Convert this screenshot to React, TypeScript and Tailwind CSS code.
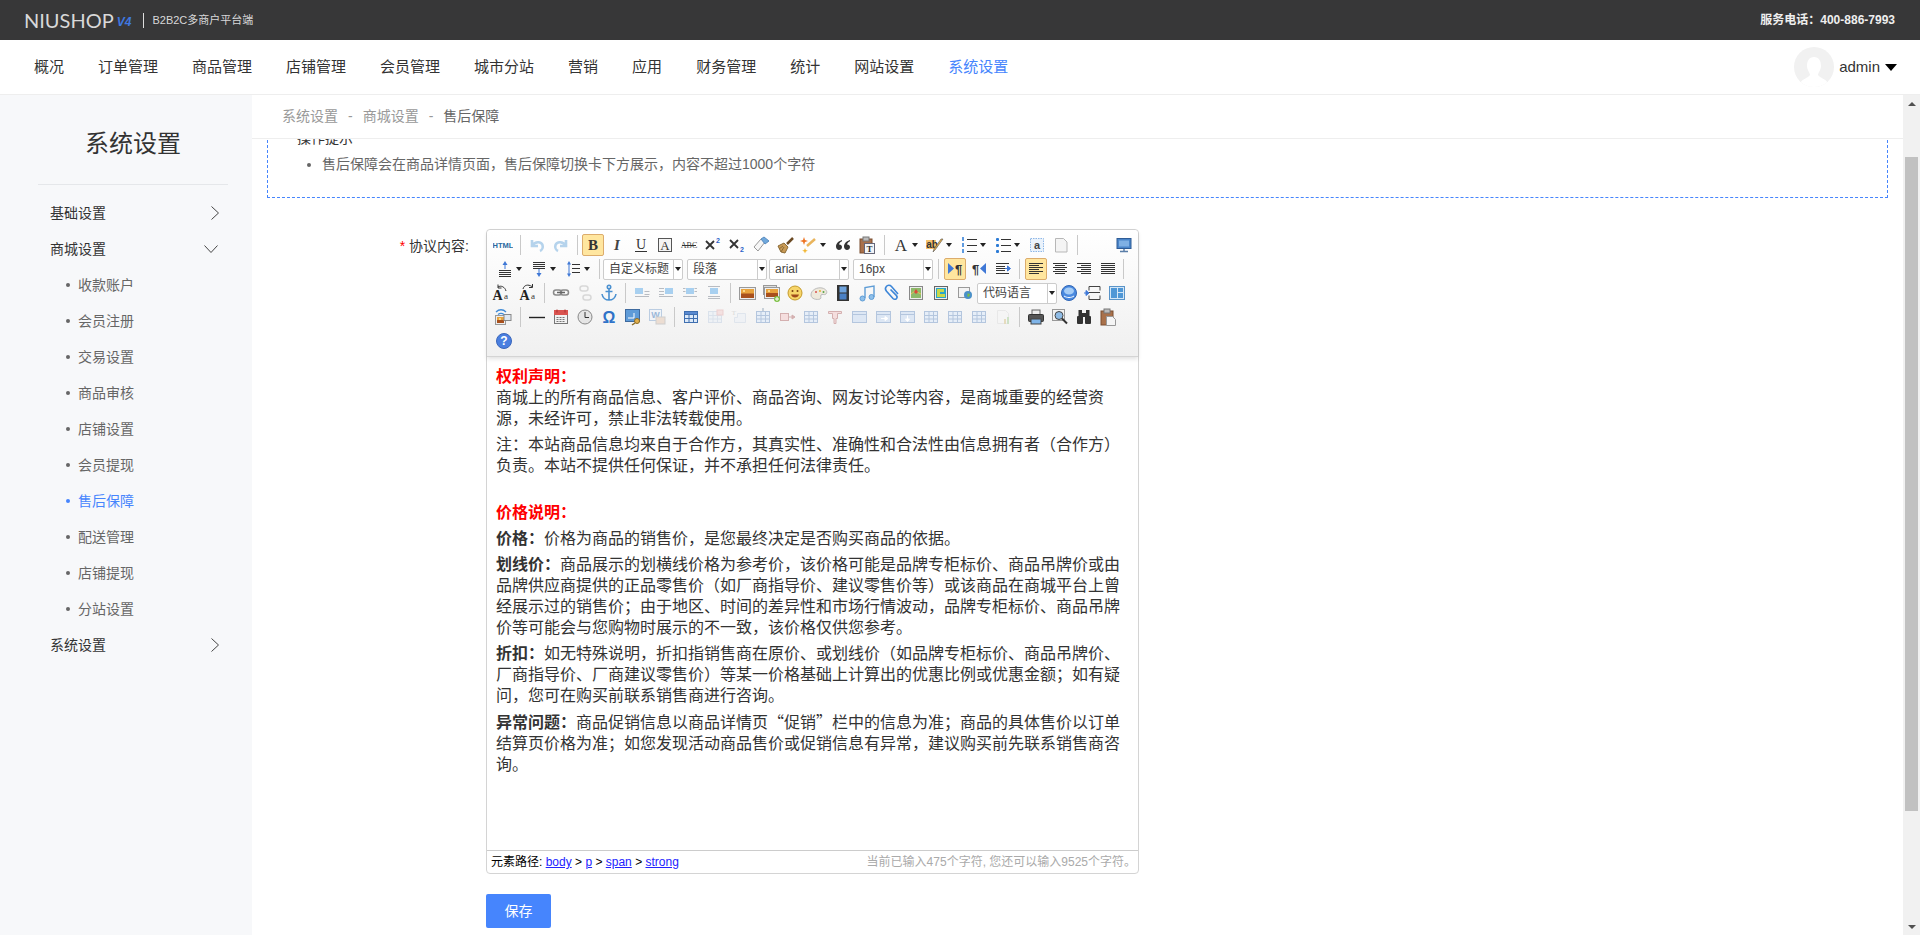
import React from "react";

const NAV = ["概况", "订单管理", "商品管理", "店铺管理", "会员管理", "城市分站", "营销", "应用", "财务管理", "统计", "网站设置", "系统设置"];
const SUB = ["收款账户", "会员注册", "交易设置", "商品审核", "店铺设置", "会员提现", "售后保障", "配送管理", "店铺提现", "分站设置"];

const serif = "Liberation Serif, serif";
const sans = "Liberation Sans, sans-serif";

// source strings are kept in ascii punctuation, the page shows the full-width forms
const PUNCT: Record<string, string> = { ",": "\uFF0C", ":": "\uFF1A", ";": "\uFF1B", "(": "\uFF08", ")": "\uFF09" };
const zh = (s: string) => s.replace(/[,:;()]/g, (c) => PUNCT[c]);

const Lines = ({ x = 4, w = 12, ys, c = "#333" }: { x?: number; w?: number; ys: number[]; c?: string }) => (
  <g stroke={c} strokeWidth="1">
    {ys.map((y, i) => (
      <line key={i} x1={x} x2={x + w} y1={y + 0.5} y2={y + 0.5} />
    ))}
  </g>
);

const Pic = ({ x = 3, y = 5, w = 14, h = 10 }: { x?: number; y?: number; w?: number; h?: number }) => (
  <g>
    <rect x={x - 0.5} y={y - 0.5} width={w + 1} height={h + 1} fill="#eee" stroke="#999" />
    <rect x={x + 1} y={y + 1} width={w - 2} height={h - 2} fill="#a8501c" />
    <rect x={x + 1} y={y + 1} width={w - 2} height={(h - 2) / 2} fill="#e8a23c" />
    <circle cx={x + 4} cy={y + 3} r="1" fill="#ffe9a0" />
  </g>
);

const ImgAlign = ({ kind }: { kind: number }) => (
  <g>
    <rect x={kind === 0 ? 3 : kind === 1 ? 9 : 6} y={5} width={8} height={6} fill="#a8d0f0" />
    <g stroke="#b8bcc2">
      {kind === 0 && <path d="M12.5 8.5h5M12.5 11.5h5M3 13.5h14" />}
      {kind === 1 && <path d="M3 5.5h5M3 8.5h5M3 11.5h5M3 13.5h14" />}
      {kind === 2 && <path d="M3 5.5h2.5M14.5 5.5H17M3 8.5h2.5M14.5 8.5H17M3 13.5h14" />}
      {kind === 3 && <path d="M4 3.5h12M4 13.5h12M4 15.5h12" />}
    </g>
  </g>
);

const Grid = ({ hi }: { hi?: React.ReactNode }) => (
  <g>
    <rect x="3.5" y="4.5" width="13" height="11" fill="#e6eef8" stroke="#b4c6de" />
    <path d="M3.5 8.5h13M3.5 12h13M8 4.5v11M12.5 4.5v11" stroke="#b4c6de" fill="none" />
    {hi}
  </g>
);

const Cell = ({ hi }: { hi?: React.ReactNode }) => (
  <g>
    <rect x="3.5" y="4.5" width="14" height="11" fill="#dde7f4" stroke="#b4c6de" />
    <path d="M3.5 7.5h14" stroke="#b4c6de" />
    {hi}
  </g>
);

// toolbar sprite, redrawn by hand
const ICONS: Record<string, React.ReactNode> = {
  html: <text x="10" y="13" textAnchor="middle" fontSize="7.5" fontWeight="700" fill="#2b6aa0" fontFamily={sans}>HTML</text>,
  undo: <path d="M5 5v6h6M5.5 10.5C8 6.5 14 6 15.5 10c.8 2.5-.5 5-2.5 6" fill="none" stroke="#b5d3ec" strokeWidth="2.6" />,
  redo: <path d="M15 5v6H9M14.5 10.5C12 6.5 6 6 4.5 10c-.8 2.5.5 5 2.5 6" fill="none" stroke="#b5d3ec" strokeWidth="2.6" />,
  b: <text x="10" y="15" textAnchor="middle" fontSize="15" fontWeight="700" fill="#333" fontFamily={serif}>B</text>,
  i: <text x="10" y="15" textAnchor="middle" fontSize="15" fontStyle="italic" fontWeight="700" fill="#444" fontFamily={serif}>I</text>,
  u: (
    <g>
      <text x="10" y="14" textAnchor="middle" fontSize="14" fill="#333" fontFamily={serif}>U</text>
      <line x1="4" x2="16" y1="16.5" y2="16.5" stroke="#333" />
    </g>
  ),
  abox: (
    <g>
      <rect x="3.5" y="3.5" width="13" height="13" fill="#f4f4f4" stroke="#555" />
      <text x="10" y="15" textAnchor="middle" fontSize="13" fill="#333" fontFamily={serif}>A</text>
    </g>
  ),
  strike: (
    <g>
      <text x="10" y="13" textAnchor="middle" fontSize="8" fill="#444" fontFamily={serif}>ABC</text>
      <line x1="3" x2="17" y1="10.5" y2="10.5" stroke="#333" />
    </g>
  ),
  sup: (
    <g>
      <path d="M3 6l8 8M11 6l-8 8" stroke="#333" strokeWidth="1.8" />
      <text x="15" y="8" textAnchor="middle" fontSize="7" fontWeight="700" fill="#2b62c8" fontFamily={sans}>2</text>
    </g>
  ),
  sub: (
    <g>
      <path d="M3 5l8 8M11 5l-8 8" stroke="#333" strokeWidth="1.8" />
      <text x="15" y="17" textAnchor="middle" fontSize="7" fontWeight="700" fill="#2b62c8" fontFamily={sans}>2</text>
    </g>
  ),
  eraser: (
    <g>
      <path d="M3 12l7-8 4 3-7 9z" fill="#f6f6f6" stroke="#999" />
      <path d="M10 4l3-2 5 4-4 3z" fill="#6fa8dc" stroke="#5a8cc0" />
    </g>
  ),
  brush: (
    <g>
      <path d="M18 3l-6 6" stroke="#6b4a24" strokeWidth="2.5" />
      <path d="M3 11l6-3 4 4-3 6-4-1z" fill="#c99a55" stroke="#8a6a35" />
      <path d="M6 17l3-5M4 14l4-3" stroke="#8a6a35" />
    </g>
  ),
  magic: (
    <g>
      <path d="M8 11l8-7" stroke="#e9b45c" strokeWidth="2.5" />
      <path d="M5 2l1 3 3 1-3 1-1 3-1-3-3-1 3-1z" fill="#ee7322" />
      <path d="M6 13l.8 2 2 .8-2 .8-.8 2-.8-2-2-.8 2-.8z" fill="#f2b632" />
    </g>
  ),
  quote: (
    <g fill="#333">
      <path d="M9 5C6 6 3 8 3 11.5 3 13.5 4.5 15 6 15s3-1.3 3-3-1.5-2.7-3-2.5C6.3 8 7.5 7 9 6.3z" />
      <path d="M17 5c-3 1-6 3-6 6.5 0 2 1.5 3.5 3 3.5s3-1.3 3-3-1.5-2.7-3-2.5c.3-1.5 1.5-2.5 3-3.2z" />
    </g>
  ),
  pastet: (
    <g>
      <rect x="3" y="4" width="12" height="14" fill="#a9714b" stroke="#7a4f30" />
      <rect x="6" y="2" width="6" height="4" fill="#bbb" stroke="#777" />
      <rect x="7.5" y="8.5" width="10" height="10" fill="#f2f5f8" stroke="#667" />
      <text x="12.5" y="17" textAnchor="middle" fontSize="9" fontWeight="700" fill="#333" fontFamily={serif}>T</text>
    </g>
  ),
  fore: <text x="10" y="16" textAnchor="middle" fontSize="17" fill="#333" fontFamily={serif}>A</text>,
  back: (
    <g>
      <rect x="1" y="5" width="10" height="9" fill="#f5c26b" />
      <text x="7" y="12.5" textAnchor="middle" fontSize="10" fontWeight="700" fill="#333" fontFamily={sans}>ab</text>
      <path d="M18 4l-8 11-2 2 1-3 7-10z" fill="#e8b04a" stroke="#555" strokeWidth=".6" />
    </g>
  ),
  ol: (
    <g>
      <path d="M3 3h3M3 9h3M3 15h3M3 5h3M3 11h3M3 17h3" stroke="#2b7bd6" strokeWidth="1.4" strokeDasharray="2 1" />
      <Lines x={8} w={10} ys={[4, 10, 16]} />
    </g>
  ),
  ul: (
    <g>
      <g fill="#2b7bd6">
        <rect x="3" y="3" width="3" height="3" rx="1" />
        <rect x="3" y="9" width="3" height="3" rx="1" />
        <rect x="3" y="15" width="3" height="3" rx="1" />
      </g>
      <Lines x={8} w={10} ys={[4, 10, 16]} />
    </g>
  ),
  sel: (
    <g>
      <rect x="3.5" y="3.5" width="13" height="13" fill="#eaf2fb" stroke="#8db6e6" strokeDasharray="1.5 1" />
      <text x="10" y="14" textAnchor="middle" fontSize="11" fontWeight="700" fill="#444" fontFamily={sans}>a</text>
    </g>
  ),
  doc: <path d="M4.5 3.5h8l3.5 3.5v10H4.5z" fill="#f4f4f4" stroke="#b7b7b7" />,
  full: (
    <g>
      <rect x="3" y="3.5" width="14" height="10" fill="#4a85c9" stroke="#2f5c96" />
      <rect x="5" y="5.5" width="10" height="6" fill="#7fb0e4" />
      <path d="M6 16.5h8M10 14v2" stroke="#5a7ea8" strokeWidth="1.5" />
    </g>
  ),
  rowtop: (
    <g>
      <path d="M10 2l-2.5 4h5z" fill="#3f78d6" />
      <line x1="10" x2="10" y1="5" y2="10" stroke="#3f78d6" />
      <Lines x={4} w={12} ys={[11, 13, 15, 17]} />
    </g>
  ),
  rowbot: (
    <g>
      <Lines x={4} w={12} ys={[3, 5, 7, 9]} />
      <line x1="10" x2="10" y1="10" y2="15" stroke="#3f78d6" />
      <path d="M10 18l-2.5-4h5z" fill="#3f78d6" />
    </g>
  ),
  lh: (
    <g>
      <path d="M6 2L4 5.5h4zM6 18L4 14.5h4z" fill="#3f78d6" />
      <line x1="6" x2="6" y1="5" y2="15" stroke="#3f78d6" />
      <Lines x={9} w={8} ys={[5, 9, 13]} />
    </g>
  ),
  ltr: (
    <g>
      <path d="M3 4l6 5.5-6 5.5z" fill="#3f78d6" />
      <text x="13.5" y="15" textAnchor="middle" fontSize="13" fontWeight="700" fill="#333" fontFamily={sans}>¶</text>
    </g>
  ),
  rtl: (
    <g>
      <path d="M17 4l-6 5.5 6 5.5z" fill="#3f78d6" />
      <text x="6.5" y="15" textAnchor="middle" fontSize="13" fontWeight="700" fill="#333" fontFamily={sans}>¶</text>
    </g>
  ),
  indent: (
    <g>
      <Lines x={3} w={13} ys={[4, 14]} />
      <Lines x={3} w={9} ys={[7, 9, 11]} />
      <path d="M12 9.5h3M17.5 9.5l-3-2.5v5z" stroke="#3f78d6" fill="#3f78d6" />
    </g>
  ),
  just: <Lines x={3} w={14} ys={[4, 6, 8, 10, 12, 14]} />,
  left: <path d="M3 4.5h14M3 6.5h10M3 8.5h14M3 10.5h10M3 12.5h14M3 14.5h10" stroke="#333" />,
  center: <path d="M3 4.5h14M5 6.5h10M3 8.5h14M5 10.5h10M3 12.5h14M5 14.5h10" stroke="#333" />,
  right: <path d="M3 4.5h14M7 6.5h10M3 8.5h14M7 10.5h10M3 12.5h14M7 14.5h10" stroke="#333" />,
  lower: (
    <g>
      <text x="6.5" y="17" textAnchor="middle" fontSize="14" fontWeight="700" fill="#222" fontFamily={serif}>A</text>
      <text x="15" y="16" textAnchor="middle" fontSize="9" fill="#333" fontFamily={serif}>a</text>
      <path d="M15 8C14 4 10 2 7 4M7 1.5V5h3.5" fill="none" stroke="#333" />
    </g>
  ),
  upper: (
    <g>
      <text x="6.5" y="17" textAnchor="middle" fontSize="14" fontWeight="700" fill="#222" fontFamily={serif}>A</text>
      <text x="15" y="16" textAnchor="middle" fontSize="9" fill="#333" fontFamily={serif}>a</text>
      <path d="M5 6c1-4 5-5 9-2.5M14.5 1v3.5H11" fill="none" stroke="#333" />
    </g>
  ),
  link: (
    <g fill="none" stroke="#8a8a8a" strokeWidth="1.5">
      <rect x="2.5" y="7" width="8" height="5" rx="2.5" />
      <rect x="9.5" y="7" width="8" height="5" rx="2.5" />
      <path d="M6 9.5h8" stroke="#666" />
    </g>
  ),
  unlink: (
    <g fill="none" stroke="#aaa" strokeWidth="1.5">
      <rect x="5" y="3" width="8" height="5" rx="2.5" />
      <rect x="8" y="12" width="8" height="5" rx="2.5" />
    </g>
  ),
  anchor: (
    <g fill="none" stroke="#4a90d0" strokeWidth="1.6">
      <circle cx="10" cy="4" r="1.7" />
      <path d="M10 6v11M6.5 8.5h7M3 11c.5 3.5 3.5 6 7 6s6.5-2.5 7-6" />
    </g>
  ),
  a0: <ImgAlign kind={0} />,
  a1: <ImgAlign kind={1} />,
  a2: <ImgAlign kind={2} />,
  a3: <ImgAlign kind={3} />,
  image: <Pic x={3} y={5} w={15} h={11} />,
  images: (
    <g>
      <rect x="2.5" y="2.5" width="13" height="9" fill="#ddd" stroke="#999" />
      <Pic x={4} y={5} w={14} h={10} />
      <circle cx="16" cy="16" r="3" fill="#7cc043" />
      <path d="M16 14v4M14 16h4" stroke="#fff" />
    </g>
  ),
  emo: (
    <g>
      <circle cx="10" cy="10" r="7" fill="#f7d56a" stroke="#c49a2a" />
      <circle cx="7.5" cy="8" r="1" fill="#7a3d10" />
      <circle cx="12.5" cy="8" r="1" fill="#7a3d10" />
      <path d="M6 11.5h8c-.5 2-2 3-4 3s-3.5-1-4-3z" fill="#a04a1a" />
    </g>
  ),
  palette: (
    <g>
      <path d="M2 12c0-5 6-8 11-7 4 .8 6 4 4 6-1.5 1.5-4-.5-5 1-1 1.5 1 3-1 4-3 1.2-9 0-9-4z" fill="#eee9dc" stroke="#bbb" />
      <circle cx="7" cy="9" r="1" fill="#d9534f" />
      <circle cx="11" cy="8" r="1" fill="#e8b339" />
      <circle cx="14.5" cy="9" r="1" fill="#5aa34a" />
    </g>
  ),
  video: (
    <g>
      <rect x="4" y="2" width="12" height="16" fill="#333" />
      <rect x="6.5" y="3.5" width="7" height="6" fill="#6fa3dd" />
      <rect x="6.5" y="10.5" width="7" height="6" fill="#4a80c4" />
    </g>
  ),
  music: (
    <g fill="#8fc0ea" stroke="#5f9dd6">
      <circle cx="5.5" cy="15.5" r="2.5" />
      <circle cx="14.5" cy="14" r="2.5" />
      <path d="M8 15V4.5l9-1.5V14" fill="none" strokeWidth="1.4" />
    </g>
  ),
  attach: <path d="M16 11L9.5 3.5c-1.5-1.7-4-1.5-5.2 0-1.2 1.4-1 3.3.2 4.7l6.5 7.3c1 1 2.5 1.1 3.4.2.9-.9.8-2.3-.1-3.3L8.5 6.5" fill="none" stroke="#3d86d8" strokeWidth="1.6" />,
  map: (
    <g>
      <rect x="3.5" y="3.5" width="13" height="13" fill="#eee" stroke="#888" />
      <rect x="5" y="5" width="10" height="10" fill="#8cba6a" />
      <path d="M5 11l4-3 6 3" stroke="#e4c15a" fill="none" />
      <path d="M10 6l2 3-2 2-2-2z" fill="#d84a3a" />
    </g>
  ),
  gmap: (
    <g>
      <rect x="3.5" y="3.5" width="13" height="13" fill="#eee" stroke="#666" />
      <rect x="5" y="5" width="10" height="10" fill="#2aa5c9" />
      <path d="M6 6h7v3H9v2h5v3H6z" fill="#c8d84a" />
    </g>
  ),
  web: (
    <g>
      <rect x="3.5" y="4.5" width="11" height="10" fill="#f3f3f3" stroke="#999" />
      <circle cx="13" cy="12" r="4" fill="#4a90c8" />
      <path d="M11 10c2 0 2 2 1 3l2 1 1-3z" fill="#7cc043" />
    </g>
  ),
  chart: (
    <g>
      <circle cx="10" cy="10" r="7.5" fill="#4a8ae0" stroke="#2f65b5" />
      <ellipse cx="10" cy="8" rx="5" ry="3.5" fill="#a6cdf6" />
      <path d="M5 13c3 2 7 2 10 0" stroke="#fff" fill="none" />
    </g>
  ),
  pb: (
    <g>
      <path d="M6 3.5h11M6 3.5v4M17 3.5v4M6 12.5v4h11v-4" fill="none" stroke="#444" />
      <path d="M6 9.5h11" stroke="#444" />
      <path d="M1 10h2.5M6 10L3 7.5v5z" fill="#3f78d6" stroke="#3f78d6" />
    </g>
  ),
  tpl: (
    <g>
      <rect x="2.5" y="3.5" width="15" height="13" fill="#d4e6f6" stroke="#5a94c8" />
      <rect x="4" y="5" width="6" height="10" fill="#4f97d6" />
      <rect x="11" y="5" width="5" height="4" fill="#4f97d6" />
      <rect x="11" y="10" width="5" height="5" fill="#4f97d6" />
    </g>
  ),
  bg: (
    <g>
      <Pic x={3} y={9} w={9} h={8} />
      <rect x="11" y="7.5" width="7" height="6" fill="#dde6f0" stroke="#888" />
      <path d="M3 5c3-3 7-3 10 0M5 7.5c2-1.5 4-1.5 6 0" fill="none" stroke="#3f8ad6" strokeWidth="1.3" />
    </g>
  ),
  hr: <line x1="2" x2="18" y1="10.5" y2="10.5" stroke="#222" strokeWidth="1.4" />,
  date: (
    <g>
      <rect x="3.5" y="4.5" width="13" height="12" fill="#f2f2f2" stroke="#777" />
      <rect x="3" y="3" width="14" height="5" fill="#d9534f" />
      <path d="M6 2.5v3M14 2.5v3" stroke="#a33" />
      <path d="M5.5 10.5h9M5.5 12.5h9M5.5 14.5h9" stroke="#777" strokeDasharray="2 1" />
    </g>
  ),
  time: (
    <g>
      <circle cx="10" cy="10" r="7" fill="#e5e5e5" stroke="#888" />
      <path d="M10 5v5.5h4" fill="none" stroke="#333" />
    </g>
  ),
  omega: <text x="10" y="16" textAnchor="middle" fontSize="16" fontWeight="700" fill="#2f72c8" fontFamily={sans}>Ω</text>,
  scrawl: (
    <g>
      <rect x="2.5" y="2.5" width="14" height="12" fill="#5e9bd8" stroke="#3e6a9e" />
      <path d="M5 11h6V6" fill="none" stroke="#fff" />
      <circle cx="14" cy="14" r="2.5" fill="#e2b04d" stroke="#8a6a25" />
      <path d="M12 16l-3 2" stroke="#8a6a25" strokeWidth="1.5" />
    </g>
  ),
  word: (
    <g opacity=".65">
      <rect x="2.5" y="2.5" width="12" height="11" fill="#f0f4fa" stroke="#9db8d8" />
      <text x="8.5" y="11" textAnchor="middle" fontSize="9" fontWeight="700" fill="#6a96c8" fontFamily={sans}>W</text>
      <rect x="9" y="10" width="9" height="7" fill="#e8d2c0" stroke="#bbb" />
    </g>
  ),
  table: (
    <g>
      <rect x="3.5" y="4.5" width="13" height="11" fill="#dce9f8" stroke="#3f6fb0" />
      <rect x="3.5" y="4.5" width="13" height="3" fill="#5a8ad0" stroke="#3f6fb0" />
      <path d="M3.5 11.5h13M8 7v8.5M12.5 7v8.5" stroke="#3f6fb0" fill="none" />
    </g>
  ),
  tdel: <Grid hi={<rect x="12" y="3" width="6" height="5" fill="#f2c4c4" stroke="#d99" />} />,
  tt: (
    <g opacity=".8">
      <text x="5" y="8" textAnchor="middle" fontSize="7" fill="#999" fontFamily={serif}>T</text>
      <path d="M8.5 6.5h8v9h-11v-5h3z" fill="#e6eef8" stroke="#b4c6de" />
    </g>
  ),
  trow: <Grid hi={<path d="M10 1v3" stroke="#9ab" />} />,
  tcol: (
    <g>
      <rect x="3.5" y="6.5" width="8" height="7" fill="#f5dede" stroke="#d4b0b0" />
      <path d="M12 10h4M18 10l-3-2v4z" stroke="#d4b0b0" fill="#d4b0b0" />
    </g>
  ),
  tgrid: <Grid />,
  tpin: <path d="M3.5 4.5h13v2h-4v5H11v5H9v-5H7.5v-5h-4z" fill="#f5dede" stroke="#d4b0b0" />,
  tcell: <Cell />,
  tcellr: <Cell hi={<path d="M8 11.5h5M15 11.5l-3-2v4z" stroke="#fff" fill="#fff" />} />,
  tcelld: <Cell hi={<path d="M10.5 8.5v4M10.5 14.5l-2-2.5h4z" stroke="#fff" fill="#fff" />} />,
  tdoc: (
    <g opacity=".5">
      <path d="M4.5 3.5h8l3 3v10h-11z" fill="#f6f6f6" stroke="#ddd" />
      <rect x="11" y="12" width="2" height="5" fill="#d8c48a" />
      <rect x="14" y="10" width="2" height="7" fill="#a8cf9c" />
    </g>
  ),
  print: (
    <g>
      <rect x="6" y="3" width="8" height="5" fill="#eee" stroke="#666" />
      <rect x="2.5" y="7.5" width="15" height="7" rx="1" fill="#555" stroke="#333" />
      <rect x="5" y="12" width="10" height="5" fill="#7fb4e8" stroke="#444" />
    </g>
  ),
  preview: (
    <g>
      <rect x="2.5" y="2.5" width="12" height="11" fill="#f3f3f3" stroke="#999" />
      <circle cx="9" cy="8.5" r="4" fill="#8fbce6" stroke="#444" />
      <path d="M12 11.5l5 5" stroke="#333" strokeWidth="2" />
    </g>
  ),
  search: (
    <g fill="#333">
      <rect x="3" y="9" width="6" height="8" rx="1" />
      <rect x="11" y="9" width="6" height="8" rx="1" />
      <rect x="4.5" y="3" width="3.5" height="6" />
      <rect x="12" y="3" width="3.5" height="6" />
      <rect x="8" y="6" width="4" height="4" />
    </g>
  ),
  paste: (
    <g>
      <rect x="3" y="4" width="12" height="14" fill="#a9714b" stroke="#7a4f30" />
      <rect x="6" y="2" width="6" height="4" fill="#bbb" stroke="#777" />
      <path d="M8.5 9.5h6l3 3v6h-9z" fill="#f5f5f5" stroke="#999" />
    </g>
  ),
  help: (
    <g>
      <circle cx="10" cy="10" r="7.5" fill="#4a7fe0" stroke="#3a66bb" />
      <text x="10" y="14" textAnchor="middle" fontSize="12" fontWeight="700" fill="#fff" fontFamily={sans}>?</text>
    </g>
  ),
};

function Btn({ n, on, off }: { n: string; on?: boolean; off?: boolean }) {
  return (
    <div className={`flex h-6 w-6 shrink-0 items-center justify-center ${off ? "opacity-40" : ""}`}>
      <div className={`flex h-[22px] w-[22px] items-center justify-center rounded-[2px] border ${on ? "border-[#dcac6c] bg-[#ffe69f]" : "border-transparent"}`}>
        <svg width="20" height="20" viewBox="0 0 20 20">
          {ICONS[n]}
        </svg>
      </div>
    </div>
  );
}

function Split({ n }: { n: string }) {
  return (
    <div className="flex h-6 w-[34px] shrink-0 items-center">
      <Btn n={n} />
      <span className="ml-[-1px] h-0 w-0 border-x-[3.5px] border-t-[4px] border-x-transparent border-t-[#222]" />
    </div>
  );
}

function Sep({ w = 10 }: { w?: number }) {
  return (
    <div className="flex h-6 shrink-0 items-center justify-center" style={{ width: w }}>
      <span className="h-5 w-px bg-[#c9c9c9]" />
    </div>
  );
}

function Combo({ label, ml = 0 }: { label: string; ml?: number }) {
  return (
    <div className="flex h-[21px] w-20 shrink-0 items-center rounded-[2px] border border-[#ccc] bg-white text-[12px] text-[#444]" style={{ marginLeft: ml }}>
      <span className="flex-1 truncate pl-[5px]">{label}</span>
      <span className="flex h-full w-[9px] items-center justify-center border-l border-[#ccc]">
        <span className="h-0 w-0 border-x-[3px] border-t-[4px] border-x-transparent border-t-[#222]" />
      </span>
    </div>
  );
}

function Toolbar() {
  return (
    <div className="h-[127px] shrink-0 rounded-t-[4px] border-b border-[#d4d4d4] bg-gradient-to-b from-white to-[#f0f0f0] pt-[3px] shadow-[0_2px_4px_rgba(0,0,0,0.12)]">
      <div className="flex h-6 items-center pl-[4px]">
        <Btn n="html" />
        <Sep />
        <Btn n="undo" />
        <Btn n="redo" />
        <Sep w={8} />
        <Btn n="b" on />
        <Btn n="i" />
        <Btn n="u" />
        <Btn n="abox" />
        <Btn n="strike" />
        <Btn n="sup" />
        <Btn n="sub" />
        <Btn n="eraser" />
        <Btn n="brush" />
        <Split n="magic" />
        <Btn n="quote" />
        <Btn n="pastet" />
        <Sep />
        <Split n="fore" />
        <Split n="back" />
        <Split n="ol" />
        <Split n="ul" />
        <Btn n="sel" />
        <Btn n="doc" />
        <Sep w={8} />
        <div className="w-[31px] shrink-0" />
        <Btn n="full" />
      </div>
      <div className="flex h-6 items-center pl-[6px]">
        <Split n="rowtop" />
        <Split n="rowbot" />
        <Split n="lh" />
        <Sep w={8} />
        <Combo label="自定义标题" />
        <Combo label="段落" ml={4} />
        <Combo label="arial" ml={2} />
        <Combo label="16px" ml={4} />
        <Sep />
        <Btn n="ltr" on />
        <Btn n="rtl" />
        <Btn n="indent" />
        <Sep w={9} />
        <Btn n="left" on />
        <Btn n="center" />
        <Btn n="right" />
        <Btn n="just" />
        <Sep w={6} />
      </div>
      <div className="flex h-6 items-center pl-[2px]">
        <Btn n="lower" />
        <div className="w-[3px] shrink-0" />
        <Btn n="upper" />
        <Sep w={9} />
        <Btn n="link" />
        <Btn n="unlink" off />
        <Btn n="anchor" />
        <Sep w={9} />
        <Btn n="a0" />
        <Btn n="a1" />
        <Btn n="a2" />
        <Btn n="a3" />
        <Sep w={9} />
        <Btn n="image" />
        <Btn n="images" />
        <Btn n="emo" />
        <Btn n="palette" />
        <Btn n="video" />
        <Btn n="music" />
        <div className="w-px shrink-0" />
        <Btn n="attach" />
        <Btn n="map" />
        <div className="w-px shrink-0" />
        <Btn n="gmap" />
        <Btn n="web" />
        <Combo label="代码语言" />
        <Btn n="chart" />
        <Btn n="pb" />
        <Btn n="tpl" />
      </div>
      <div className="flex h-6 items-center pl-[4px]">
        <Btn n="bg" />
        <Sep />
        <Btn n="hr" />
        <Btn n="date" />
        <Btn n="time" />
        <Btn n="omega" />
        <Btn n="scrawl" />
        <Btn n="word" />
        <Sep />
        <Btn n="table" />
        <Btn n="tdel" off />
        <Btn n="tt" off />
        <Btn n="trow" />
        <Btn n="tcol" />
        <Btn n="tgrid" />
        <Btn n="tpin" />
        <Btn n="tcell" />
        <Btn n="tcellr" />
        <Btn n="tcelld" />
        <Btn n="tgrid" />
        <Btn n="tgrid" />
        <Btn n="tgrid" />
        <Btn n="tdoc" />
        <Sep w={9} />
        <Btn n="print" />
        <Btn n="preview" />
        <Btn n="search" />
        <Btn n="paste" />
      </div>
      <div className="flex h-6 items-center pl-[5px]">
        <Btn n="help" />
      </div>
    </div>
  );
}

function Sidebar() {
  return (
    <aside className="w-[252px] shrink-0 bg-[#f7f8fa]">
      <div className="ml-[38px] mr-[24px] flex h-[90px] items-center justify-center border-b border-[#e5e7ea] pt-[8px] text-[24px] text-[#333]">系统设置</div>
      <div className="mt-[10px] text-[14px]">
        <div className="flex h-9 items-center justify-between pl-[50px] pr-[33px] text-[#333]">
          基础设置
          <svg width="8" height="14" viewBox="0 0 8 14" fill="none" stroke="#444">
            <path d="M.5.5l7 6.5-7 6.5" />
          </svg>
        </div>
        <div className="flex h-9 items-center justify-between pl-[50px] pr-[34px] text-[#333]">
          商城设置
          <svg width="14" height="8" viewBox="0 0 14 8" fill="none" stroke="#444">
            <path d="M.5.5l6.5 7 6.5-7" />
          </svg>
        </div>
        {SUB.map((s) => (
          <div key={s} className={`flex h-9 items-center pl-[66px] ${s === "售后保障" ? "text-[#4685fd]" : "text-[#666]"}`}>
            <span className={`mr-[8px] h-1 w-1 rounded-full ${s === "售后保障" ? "bg-[#4685fd]" : "bg-[#666]"}`} />
            {s}
          </div>
        ))}
        <div className="flex h-9 items-center justify-between pl-[50px] pr-[33px] text-[#333]">
          系统设置
          <svg width="8" height="14" viewBox="0 0 8 14" fill="none" stroke="#444">
            <path d="M.5.5l7 6.5-7 6.5" />
          </svg>
        </div>
      </div>
    </aside>
  );
}

export default function App() {
  return (
    <div className="flex h-[935px] flex-col overflow-hidden bg-white font-['Liberation_Sans','Noto_Sans_CJK_SC',sans-serif] text-[14px] text-[#333]">
      <header className="flex h-10 shrink-0 items-center bg-[#373738] pl-[24px] pr-[25px]">
        <span className="font-['Lato',sans-serif] text-[20px] leading-none text-[#d8d8d8]">NIUSHOP</span>
        <span className="ml-[3px] mt-[3px] font-['Liberation_Sans',sans-serif] text-[12px] font-bold italic leading-none text-[#3f78e0]">V4</span>
        <span className="ml-[12px] h-[15px] w-px bg-[#ddd]" />
        <span className="ml-[8px] text-[11px] text-[#d8d8d8]">B2B2C多商户平台端</span>
        <span className="ml-auto text-[12px] font-bold text-[#eee]">{zh("服务电话:400-886-7993")}</span>
      </header>

      <nav className="flex h-[55px] shrink-0 items-center border-b border-[#eee] pl-[17px] pr-[23px] text-[15px]">
        {NAV.map((n, i) => (
          <span key={i} className={`px-[17px] ${i === NAV.length - 1 ? "text-[#4685fd]" : "text-[#333]"}`}>
            {n}
          </span>
        ))}
        <div className="ml-auto flex items-center">
          <svg width="40" height="40" viewBox="0 0 40 40">
            <clipPath id="av">
              <circle cx="20" cy="20" r="20" />
            </clipPath>
            <g clipPath="url(#av)">
              <rect width="40" height="40" fill="#f1f1f1" />
              <path d="M20 10c-5 0-7 4-7 9 0 4 3 7 3 9-2 3-8 4-10 8v6h28v-6c-2-4-8-5-10-8 0-2 3-5 3-9 0-5-2-9-7-9z" fill="#fff" />
            </g>
          </svg>
          <span className="ml-[5px] text-[15px] text-[#333]">admin</span>
          <span className="ml-[5px] h-0 w-0 border-x-[6px] border-t-[7px] border-x-transparent border-t-black" />
        </div>
      </nav>

      <div className="flex min-h-0 flex-1">
        <Sidebar />
        <main className="flex min-w-0 flex-1 flex-col">
          <div className="flex h-[44px] shrink-0 items-center gap-[10px] border-b border-[#eee] pl-[30px] text-[#999]">
            <span>系统设置</span>
            <span>-</span>
            <span>商城设置</span>
            <span>-</span>
            <span className="text-[#666]">售后保障</span>
          </div>
          <div className="min-h-0 flex-1 overflow-hidden">
            <div className="mx-[15px] mt-[-24px] h-[83px] border border-dashed border-[#4685fd] pl-[29px] pt-[12px]">
              <div className="h-5 leading-5 text-[#333]">操作提示</div>
              <ul className="ml-[25px] mt-[6px] list-disc leading-5 text-[#666]">
                <li>{zh("售后保障会在商品详情页面,售后保障切换卡下方展示,内容不超过1000个字符")}</li>
              </ul>
            </div>
            <div className="mt-[31px] flex pl-[15px]">
              <div className="flex h-[34px] w-[219px] items-center justify-end pr-[17px] text-[#333]">
                <span className="mr-[4px] text-[#f00]">*</span>协议内容:
              </div>
              <div>
                <div className="flex h-[645px] w-[653px] flex-col rounded-[4px] border border-[#d4d4d4]">
                  <Toolbar />
                  <div className="min-h-0 flex-1 overflow-hidden px-[9px] pt-[9px] text-[16px] leading-[21px] text-[#333]">
                    <p>
                      <strong className="text-[#f00]">{zh("权利声明:")}</strong>
                      <br />
                      {zh("商城上的所有商品信息、客户评价、商品咨询、网友讨论等内容,是商城重要的经营资源,未经许可,禁止非法转载使用。")}
                    </p>
                    <p className="mt-[5px]">
                      {zh("注:本站商品信息均来自于合作方,其真实性、准确性和合法性由信息拥有者(合作方)负责。本站不提供任何保证,并不承担任何法律责任。")}
                      <br />
                      <br />
                    </p>
                    <p className="mt-[5px]">
                      <strong className="text-[#f00]">{zh("价格说明:")}</strong>
                    </p>
                    <p className="mt-[5px]">
                      <strong>{zh("价格:")}</strong>
                      {zh("价格为商品的销售价,是您最终决定是否购买商品的依据。")}
                    </p>
                    <p className="mt-[5px]">
                      <strong>{zh("划线价:")}</strong>
                      {zh("商品展示的划横线价格为参考价,该价格可能是品牌专柜标价、商品吊牌价或由品牌供应商提供的正品零售价(如厂商指导价、建议零售价等)或该商品在商城平台上曾经展示过的销售价;由于地区、时间的差异性和市场行情波动,品牌专柜标价、商品吊牌价等可能会与您购物时展示的不一致,该价格仅供您参考。")}
                    </p>
                    <p className="mt-[5px]">
                      <strong>{zh("折扣:")}</strong>
                      {zh("如无特殊说明,折扣指销售商在原价、或划线价(如品牌专柜标价、商品吊牌价、厂商指导价、厂商建议零售价)等某一价格基础上计算出的优惠比例或优惠金额;如有疑问,您可在购买前联系销售商进行咨询。")}
                    </p>
                    <p className="mt-[5px]">
                      <strong>{zh("异常问题:")}</strong>
                      {zh("商品促销信息以商品详情页")}
                      <span className="font-['Noto_Sans_CJK_SC',sans-serif]">“促销”</span>
                      {zh("栏中的信息为准;商品的具体售价以订单结算页价格为准;如您发现活动商品售价或促销信息有异常,建议购买前先联系销售商咨询。")}
                    </p>
                  </div>
                  <div className="flex h-[23px] shrink-0 items-center justify-between border-t border-[#ccc] pl-[4px] pr-[2px] text-[12px] text-black">
                    <span>
                      元素路径: <span className="text-[#22f] underline">body</span> &gt; <span className="text-[#22f] underline">p</span> &gt; <span className="text-[#22f] underline">span</span> &gt; <span className="text-[#22f] underline">strong</span>
                    </span>
                    <span className="text-[#aaa]">当前已输入475个字符, 您还可以输入9525个字符。</span>
                  </div>
                </div>
                <button className="mt-[20px] h-[34px] w-[65px] rounded-[2px] bg-[#4685fd] text-[14px] text-white">保存</button>
              </div>
            </div>
          </div>
        </main>
        <div className="flex w-[17px] shrink-0 flex-col bg-[#f1f1f1]">
          <div className="flex h-[17px] items-center justify-center">
            <span className="h-0 w-0 border-x-[4px] border-b-[4px] border-x-transparent border-b-[#505050]" />
          </div>
          <div className="h-[45px]" />
          <div className="mx-[2px] h-[654px] bg-[#c1c1c1]" />
          <div className="flex-1" />
          <div className="flex h-[17px] items-center justify-center">
            <span className="h-0 w-0 border-x-[4px] border-t-[4px] border-x-transparent border-t-[#505050]" />
          </div>
        </div>
      </div>
    </div>
  );
}
